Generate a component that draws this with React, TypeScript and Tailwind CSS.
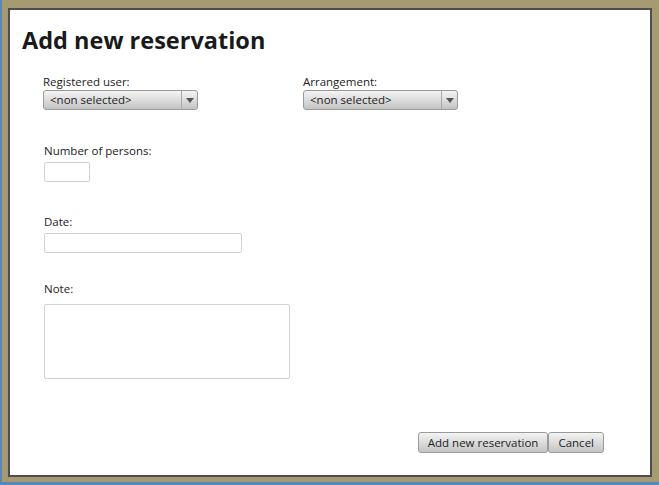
const font = { fontFamily: '"Open Sans", "Liberation Sans", sans-serif' };

const Combo = () => (
  <div className="flex h-[20px] w-[155px] items-stretch rounded-[3px] border border-[#9a9a9a] bg-gradient-to-b from-[#f4f4f4] via-[#dcdcdc] to-[#c4c4c4] text-[11.5px] leading-none text-[#222]">
    <div className="flex flex-1 items-center pl-[6px]">&lt;non selected&gt;</div>
    <div className="flex w-[16px] items-center justify-center border-l border-[#a8a8a8]">
      <svg width="8" height="5" viewBox="0 0 8 5">
        <path d="M0 0 H8 L4 5 Z" fill="#555" />
      </svg>
    </div>
  </div>
);

const Label = ({ text }: { text: string }) => (
  <div className="text-[11.5px] leading-[16px] text-[#222]">{text}</div>
);

const Btn = ({ text }: { text: string }) => (
  <button className="h-[21px] rounded-[3px] border border-[#9a9a9a] bg-gradient-to-b from-[#f4f4f4] via-[#dcdcdc] to-[#c4c4c4] px-[9px] text-[11.5px] leading-none text-[#222]">
    {text}
  </button>
);

export default function App() {
  return (
    <div className="h-[485px] w-[659px] bg-[#5a86b8] pb-[3px] pl-[2px]" style={font}>
      <div className="h-full w-full bg-[#a69a72] pb-[5px] pl-[6px] pr-[7px] pt-[8px]">
        <div className="flex h-full w-full flex-col border-2 border-[#4e4e4e] bg-white">
          <h1 className="ml-[12px] mt-[14px] text-[23.5px] font-bold leading-[32px] text-[#1a1a1a]">
            Add new reservation
          </h1>
          <div className="ml-[33px] mt-[18px] flex gap-[105px]">
            <div className="flex flex-col">
              <Label text="Registered user:" />
              <Combo />
            </div>
            <div className="flex flex-col">
              <Label text="Arrangement:" />
              <Combo />
            </div>
          </div>
          <div className="ml-[34px] mt-[33px] flex flex-col gap-[3px]">
            <Label text="Number of persons:" />
            <input className="h-[20px] w-[46px] rounded-[2px] border border-[#d2d2d2] bg-white" />
          </div>
          <div className="ml-[34px] mt-[32px] flex flex-col gap-[3px]">
            <Label text="Date:" />
            <input className="h-[20px] w-[198px] rounded-[2px] border border-[#d2d2d2] bg-white" />
          </div>
          <div className="ml-[34px] mt-[28px] flex flex-col gap-[7px]">
            <Label text="Note:" />
            <textarea className="h-[75px] w-[246px] resize-none rounded-[2px] border border-[#d2d2d2] bg-white" />
          </div>
          <div className="mr-[46px] mt-[53px] flex justify-end">
            <Btn text="Add new reservation" />
            <Btn text="Cancel" />
          </div>
        </div>
      </div>
    </div>
  );
}
